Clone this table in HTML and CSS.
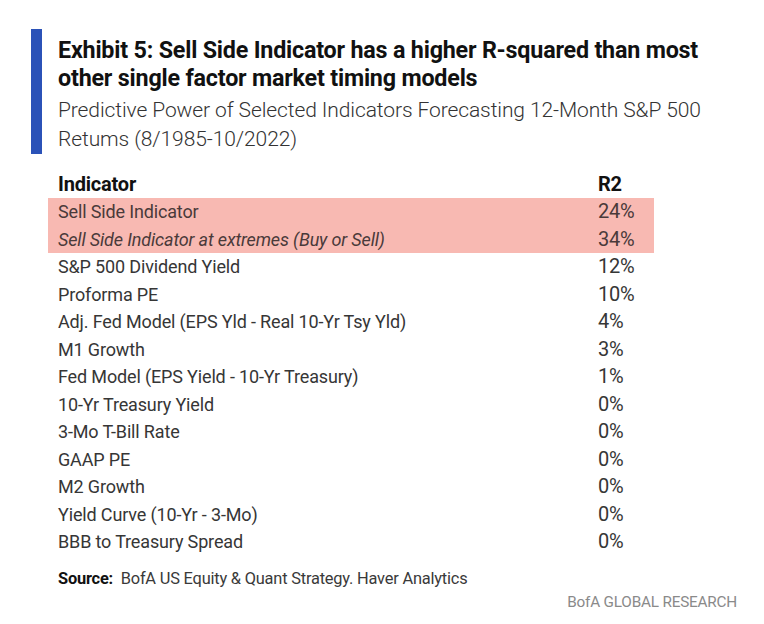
FILE: index.html
```html
<!DOCTYPE html>
<html>
<head>
<meta charset="utf-8">
<link rel="stylesheet" href="styles.css">
</head>
<body>
<div class="page">
  <header class="exhibit-head">
    <div class="bar"></div>
    <div class="head-text">
      <h1 class="title">Exhibit 5: Sell Side Indicator has a higher R-squared than most other single factor market timing models</h1>
      <p class="subtitle">Predictive Power of Selected Indicators Forecasting 12-Month S&amp;P 500 Retums (8/1985-10/2022)</p>
    </div>
  </header>

  <div class="table">
    <div class="row head"><span>Indicator</span><span>R2</span></div>
    <div class="row hl"><span>Sell Side Indicator</span><span class="num">24%</span></div>
    <div class="row hl it"><span>Sell Side Indicator at extremes (Buy or Sell)</span><span class="num">34%</span></div>
    <div class="row"><span>S&amp;P 500 Dividend Yield</span><span class="num">12%</span></div>
    <div class="row"><span>Proforma PE</span><span class="num">10%</span></div>
    <div class="row"><span>Adj. Fed Model (EPS Yld - Real 10-Yr Tsy Yld)</span><span class="num">4%</span></div>
    <div class="row"><span>M1 Growth</span><span class="num">3%</span></div>
    <div class="row"><span>Fed Model (EPS Yield - 10-Yr Treasury)</span><span class="num">1%</span></div>
    <div class="row"><span>10-Yr Treasury Yield</span><span class="num">0%</span></div>
    <div class="row"><span>3-Mo T-Bill Rate</span><span class="num">0%</span></div>
    <div class="row"><span>GAAP PE</span><span class="num">0%</span></div>
    <div class="row"><span>M2 Growth</span><span class="num">0%</span></div>
    <div class="row"><span>Yield Curve (10-Yr - 3-Mo)</span><span class="num">0%</span></div>
    <div class="row"><span>BBB to Treasury Spread</span><span class="num">0%</span></div>
  </div>

  <p class="source"><b>Source:</b>&nbsp; BofA US Equity &amp; Quant Strategy. Haver Analytics</p>
  <p class="brand">BofA GLOBAL RESEARCH</p>
</div>
</body>
</html>
```

FILE: styles.css
```css
html, body {
  margin: 0;
  padding: 0;
  background: #ffffff;
}

body {
  font-family: Roboto, "Liberation Sans", sans-serif;
  color: #363636;
}

.page {
  width: 764px;
  height: 624px;
  padding-top: 29px;
  box-sizing: border-box;
}

.exhibit-head {
  display: flex;
  align-items: stretch;
  margin-left: 31px;
  gap: 16px;
}

.bar {
  width: 11px;
  flex: none;
  background: #2b52b8;
}

.head-text {
  padding-top: 6.5px;
}

.title {
  margin: 0;
  width: 680px;
  font-size: 23.3px;
  line-height: 28px;
  font-weight: 700;
  color: #111111;
  letter-spacing: -0.2px;
}

.subtitle {
  margin: 4px 0 0;
  width: 680px;
  font-size: 21px;
  line-height: 29px;
  font-weight: 300;
  color: #333333;
  letter-spacing: -0.1px;
}

.table {
  margin: 17px 0 0 48px;
  width: 606px;
}

.row {
  display: grid;
  grid-template-columns: 540px 66px;
  height: 27.5px;
  line-height: 27.5px;
  font-size: 18px;
  letter-spacing: -0.15px;
  color: #363636;
}

.row span {
  padding-left: 10px;
  white-space: nowrap;
}

.row .num {
  font-size: 20px;
  letter-spacing: -0.3px;
}

.row.head {
  font-size: 20px;
  font-weight: 700;
  color: #111111;
  letter-spacing: -0.2px;
}

.row.hl {
  background: #f8b9b2;
  color: #4a3a3a;
}

.row.it span:first-child {
  font-style: italic;
}

.source {
  margin: 13px 0 0 58px;
  font-size: 16.4px;
  line-height: 20px;
  color: #3a3a3a;
  letter-spacing: -0.2px;
}

.source b {
  font-weight: 700;
  color: #111111;
}

.brand {
  margin: 3px 27px 0 0;
  text-align: right;
  font-size: 15.3px;
  line-height: 20px;
  color: #8a8a8a;
  letter-spacing: -0.2px;
}
```
